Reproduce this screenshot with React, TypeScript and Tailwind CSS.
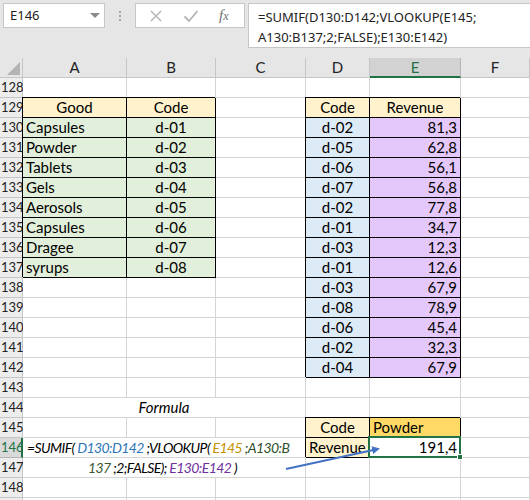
import { ReactNode } from 'react';

const COLW = ['w-[104px]', 'w-[89px]', 'w-[90px]', 'w-[64px]', 'w-[91px]', 'w-[69px]'];
const LETTERS = ['A', 'B', 'C', 'D', 'E', 'F'];

const goods = ['Capsules', 'Powder', 'Tablets', 'Gels', 'Aerosols', 'Capsules', 'Dragee', 'syrups'];
const dCodes = ['d-02', 'd-05', 'd-06', 'd-07', 'd-02', 'd-01', 'd-03', 'd-01', 'd-03', 'd-08', 'd-06', 'd-02', 'd-04'];
const revs = ['81,3', '62,8', '56,1', '56,8', '77,8', '34,7', '12,3', '12,6', '67,9', '78,9', '45,4', '32,3', '67,9'];

type Cell = { t?: ReactNode; a?: 'l' | 'c' | 'r'; bg?: string; b?: boolean; sel?: boolean };

function cellsFor(r: number): Cell[] {
  const row: Cell[] = [{}, {}, {}, {}, {}, {}];
  if (r === 129) {
    row[0] = { t: 'Good', a: 'c', bg: 'bg-[#fff2cc]', b: true };
    row[1] = { t: 'Code', a: 'c', bg: 'bg-[#fff2cc]', b: true };
    row[3] = { t: 'Code', a: 'c', bg: 'bg-[#fff2cc]', b: true };
    row[4] = { t: 'Revenue', a: 'c', bg: 'bg-[#fff2cc]', b: true };
  }
  if (r >= 130 && r <= 137) {
    row[0] = { t: goods[r - 130], a: 'l', bg: 'bg-[#e2efda]', b: true };
    row[1] = { t: `d-0${r - 129}`, a: 'c', bg: 'bg-[#e2efda]', b: true };
  }
  if (r >= 130 && r <= 142) {
    row[3] = { t: dCodes[r - 130], a: 'c', bg: 'bg-[#ddebf7]', b: true };
    row[4] = { t: revs[r - 130], a: 'r', bg: 'bg-[#e4c8fb]', b: true };
  }
  if (r === 145) {
    row[3] = { t: 'Code', a: 'c', bg: 'bg-[#fff2cc]', b: true };
    row[4] = { t: 'Powder', a: 'l', bg: 'bg-[#ffd966]', b: true };
  }
  if (r === 146) {
    row[3] = { t: 'Revenue', a: 'l', bg: 'bg-[#fff2cc]', b: true };
    row[4] = { t: '191,4', a: 'r', sel: true };
  }
  return row;
}

function GridCell({ c, w }: { c: Cell; w: string }) {
  const align = c.a === 'c' ? 'justify-center' : c.a === 'r' ? 'justify-end' : 'justify-start';
  return (
    <div
      className={`${w} h-5 shrink-0 flex items-center px-[3px] border-r border-b whitespace-nowrap ${align} ${c.bg ?? 'bg-white'} ${
        c.b ? 'relative z-10 border-black shadow-[-1px_-1px_0_0_#000]' : 'border-[#d4d4d4]'
      } ${c.sel ? 'relative z-20' : ''}`}
    >
      {c.t}
      {c.sel && (
        <div className="absolute -left-[2px] -top-[2px] w-[93px] h-[22px] border-2 border-[#217346]">
          <div className="absolute -right-[4px] -bottom-[4px] w-[6px] h-[6px] bg-[#217346] border border-white" />
        </div>
      )}
    </div>
  );
}

function Merged({ children, cls }: { children: ReactNode; cls: string }) {
  return (
    <div className={`w-[283px] h-5 shrink-0 flex items-center border-r border-b border-[#d4d4d4] bg-white whitespace-nowrap italic ${cls}`}>
      {children}
    </div>
  );
}

function RowHead({ r }: { r: number }) {
  const active = r === 146;
  return (
    <div
      className={`w-[23px] h-5 shrink-0 flex items-center pl-px text-[13px] border-b border-r ${
        active ? 'bg-[#d9d9d9] text-[#217346] border-r-2 border-r-[#217346] border-b-[#b5b5b5]' : 'bg-[#ededed] text-[#222] border-[#c6c6c6]'
      }`}
    >
      {r}
    </div>
  );
}

export default function App() {
  const rows = Array.from({ length: 22 }, (_, i) => 128 + i);
  return (
    <div className="w-[530px] h-[500px] overflow-hidden bg-white text-black font-['Lato',sans-serif] text-[15px]">
      {/* formula bar */}
      <div className="h-[58px] bg-[#e6e6e6] relative flex items-start pt-[3px] pl-[3px] font-['Noto_Sans',sans-serif]">
        <div className="w-[102px] h-[25px] bg-white border border-[#c6c6c6] flex items-center pl-[6px] text-[13px] text-[#222]">
          <span className="flex-1">E146</span>
          <svg width="10" height="6" className="mr-[4px]"><polygon points="0,0 10,0 5,5" fill="#8a8a8a" /></svg>
        </div>
        <div className="w-[30px] h-[25px] flex flex-col items-center justify-center gap-[2px]">
          <div className="w-[2px] h-[2px] bg-[#a6a6a6]" />
          <div className="w-[2px] h-[2px] bg-[#a6a6a6]" />
          <div className="w-[2px] h-[2px] bg-[#a6a6a6]" />
        </div>
        <div className="w-[110px] h-[25px] bg-white border border-[#c6c6c6] flex items-center">
          <svg width="14" height="14" viewBox="0 0 14 14" className="ml-[13px]">
            <path d="M2 2 L12 12 M12 2 L2 12" stroke="#b3b3b3" strokeWidth="1.4" />
          </svg>
          <svg width="16" height="14" viewBox="0 0 16 14" className="ml-[20px]">
            <path d="M1.5 7.5 L6 12 L14.5 2" stroke="#b3b3b3" strokeWidth="1.8" fill="none" />
          </svg>
          <span className="ml-[20px] italic font-['Liberation_Serif',serif] text-[15px] text-[#6e6e6e]">f<span className="text-[12px]">x</span></span>
        </div>
        <div className="ml-[3px] flex-1 h-[45px] bg-white border border-[#c6c6c6] border-r-0 pl-[9px] pt-[3px] text-[13px] leading-[20px] text-[#222]">
          <div>=SUMIF(D130:D142;VLOOKUP(E145;</div>
          <div>A130:B137;2;FALSE);E130:E142)</div>
        </div>
      </div>

      {/* column headers */}
      <div className="flex h-5">
        <div className="w-[23px] h-5 shrink-0 bg-[#e6e6e6] border-r border-b border-[#c6c6c6] flex items-end justify-end pr-[2px] pb-[2px]">
          <svg width="13" height="13"><polygon points="13,0 13,13 0,13" fill="#b4b4b4" /></svg>
        </div>
        {LETTERS.map((l, i) => (
          <div
            key={l}
            className={`${COLW[i]} h-5 shrink-0 flex items-center justify-center border-r ${
              l === 'E'
                ? 'bg-[#d2d2d2] text-[#217346] border-b-2 border-b-[#217346] border-r-[#b5b5b5]'
                : 'bg-[#e6e6e6] text-[#222] border-b border-[#c6c6c6]'
            }`}
          >
            {l}
          </div>
        ))}
      </div>

      {/* grid */}
      <div className="relative">
        {rows.map((r) => {
          const cells = cellsFor(r);
          if (r === 144 || r === 146 || r === 147) {
            return (
              <div key={r} className="flex">
                <RowHead r={r} />
                {r === 144 && <Merged cls="justify-center">Formula</Merged>}
                {r === 146 && (
                  <Merged cls="pl-[4px] text-[14px] tracking-[-0.6px] overflow-hidden">
                    <span>=SUMIF(</span>
                    <span className="text-[#2e75b6]">&nbsp;D130:D142&nbsp;</span>
                    <span>;VLOOKUP(</span>
                    <span className="text-[#c59100]">&nbsp;E145&nbsp;</span>
                    <span className="text-[#2f4f2a]">;A130:B</span>
                  </Merged>
                )}
                {r === 147 && (
                  <Merged cls="pl-[65px] text-[14px] tracking-[-0.6px]">
                    <span className="text-[#3a5a32]">137</span>
                    <span>&nbsp;;2;FALSE);</span>
                    <span className="text-[#7030a0]">&nbsp;E130:E142&nbsp;</span>
                    <span>)</span>
                  </Merged>
                )}
                {cells.slice(3).map((c, i) => (
                  <GridCell key={i} c={c} w={COLW[i + 3]} />
                ))}
              </div>
            );
          }
          return (
            <div key={r} className="flex">
              <RowHead r={r} />
              {cells.map((c, i) => (
                <GridCell key={i} c={c} w={COLW[i]} />
              ))}
            </div>
          );
        })}
        {/* arrow from formula to result */}
        <svg className="absolute left-0 top-0 z-30 pointer-events-none" width="530" height="440">
          <defs>
            <marker id="ah" markerWidth="8" markerHeight="8" refX="6" refY="4" orient="auto" markerUnits="userSpaceOnUse">
              <polygon points="0,0 8,4 0,8" fill="#4472c4" />
            </marker>
          </defs>
          <line x1="286" y1="391" x2="378" y2="371" stroke="#4472c4" strokeWidth="2" markerEnd="url(#ah)" />
        </svg>
      </div>
    </div>
  );
}
